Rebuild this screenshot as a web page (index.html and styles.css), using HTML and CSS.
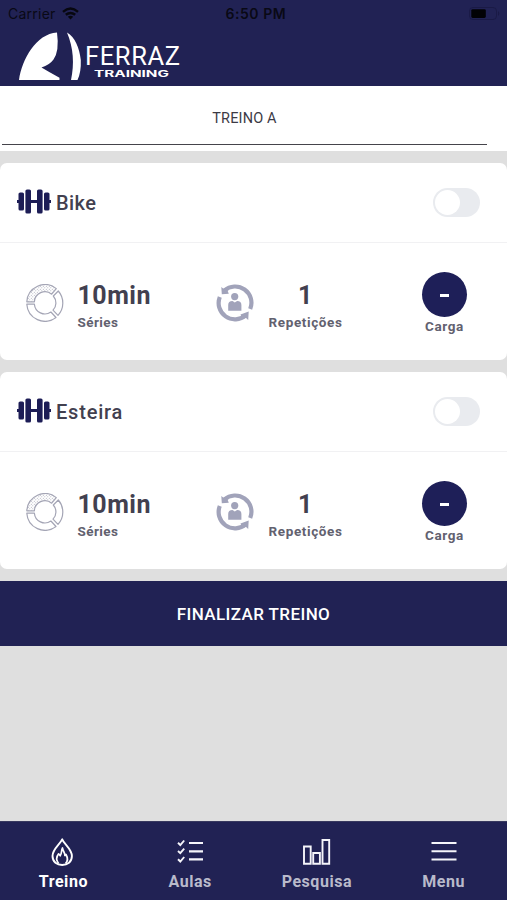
FILE: index.html
```html
<!DOCTYPE html>
<html lang="pt-BR">
<head>
<meta charset="utf-8">
<meta name="viewport" content="width=device-width, initial-scale=1">
<title>Ferraz Training</title>
<link rel="stylesheet" href="styles.css">
</head>
<body>
<svg class="defs" width="0" height="0">
  <defs>
    <pattern id="dots" width="3" height="3" patternUnits="userSpaceOnUse">
      <circle cx=".8" cy=".8" r=".5" fill="#a4a5b5"/><circle cx="2.3" cy="2.3" r=".5" fill="#a4a5b5"/>
    </pattern>
    <symbol id="dumbbell" viewBox="0 0 34 25">
      <path d="M0 12.5h3M12 12.5h10M31 12.5h3" stroke="#1d1d56" stroke-width="3.2"/>
      <g fill="#1d1d56"><rect x="1.5" y="3.5" width="5.5" height="18" rx="1.6"/><rect x="8.4" y=".5" width="5.6" height="24" rx="1.6"/><rect x="20" y=".5" width="5.6" height="24" rx="1.6"/><rect x="27" y="3.5" width="5.5" height="18" rx="1.6"/></g>
    </symbol>
    <symbol id="ring" viewBox="0 0 38 38">
      <g fill="none" stroke="#a4a5b5" stroke-width="1.2" stroke-linejoin="round">
        <path d="M.8 17.8A18.2 18.2 0 0 1 30.3 4.6L25.7 10.2A10.5 10.5 0 0 0 8.4 17.8Z" fill="url(#dots)"/>
        <path d="M.8 20.2A18.2 18.2 0 0 0 30 33.5L24.9 28A10.5 10.5 0 0 1 8.4 20.2Z"/>
        <path d="M32.3 7A18.2 18.2 0 0 1 32 31.3L27 26.2A10.5 10.5 0 0 0 27.3 12Z"/>
      </g>
    </symbol>
    <symbol id="cycle" viewBox="0 0 38 38">
      <path d="M8.300 6.600A16.3 16.3 0 0 1 34.200 25M29.800 31.200A16.3 16.3 0 0 1 3.800 13" fill="none" stroke="#a1a3ba" stroke-width="4.200"/>
      <g fill="#a1a3ba"><path d="M5.3 3L7.500 4.800 10.500 4 12.8 9.800 5.8 10.2Z"/><path d="M32.700 27.6L32.200 36 29.800 33.800 26 34.500 24.5 30.600Z"/><circle cx="18.700" cy="12.6" r="3.6"/><path d="M12.2 26.8V21q0-4.1 4.3-4.1l2.3 1.5 2.3-1.5q4.3 0 4.3 4.1v5.8z"/></g>
    </symbol>
  </defs>
</svg>

<div class="screen">
  <header class="header">
    <div class="status">
      <span class="carrier">Carrier</span>
      <svg class="wifi" width="17" height="13" viewBox="0 0 17 13"><g fill="none" stroke="#07070f" stroke-width="2.4"><path d="M1 4.8Q8.5-1.6 16 4.8M3.8 7.8Q8.5 4 13.2 7.8"/></g><path d="M5.8 9.7Q8.5 7.6 11.2 9.7L8.5 12.5Z" fill="#07070f"/></svg>
      <span class="clock">6:50 PM</span>
      <svg class="battery" width="32" height="13" viewBox="0 0 32 13"><rect x=".5" y=".5" width="27" height="12" rx="3.5" fill="none" stroke="#1a1a46"/><rect x="2.3" y="2.2" width="14.5" height="8.8" rx="1.4" fill="#020205"/><path d="M29 4q2.8 2.5 0 5z" fill="#1a1a46"/></svg>
    </div>
    <svg class="logo" width="162" height="50" viewBox="0 0 162 50">
      <path d="M0 48C3 27 17 2 38 .5Q40.500 19 34.500 27.500 30.500 33 22.5 35.5 30 40 40.500 45.800V48Z" fill="#fff"/>
      <path d="M48 .5C56 5 60.500 16 61.8 28Q62.300 40 58.5 48H52C55.500 32 54.500 16 48 .5Z" fill="#fff"/>
      <text class="logo-name" x="66" y="32.500" textLength="95" lengthAdjust="spacing">FERRAZ</text>
      <text class="logo-sub" x="75" y="44.5" textLength="75" lengthAdjust="spacingAndGlyphs">TRAINING</text>
    </svg>
  </header>

  <div class="tabs"><div class="tab">TREINO A</div></div>

  <main class="content">
    <section class="card">
      <div class="card-head">
        <svg class="dumbbell" width="34" height="25"><use href="#dumbbell"/></svg>
        <h2 class="name">Bike</h2>
        <span class="switch"></span>
      </div>
      <div class="stats">
        <svg class="stat-icon" width="38" height="38"><use href="#ring"/></svg>
        <div class="stat series"><b class="value">10min</b><span class="label">Séries</span></div>
        <svg class="stat-icon" width="38" height="38"><use href="#cycle"/></svg>
        <div class="stat reps"><b class="value">1</b><span class="label">Repetições</span></div>
        <div class="load"><span class="load-btn"><i class="dash"></i></span><span class="label">Carga</span></div>
      </div>
    </section>
    <section class="card">
      <div class="card-head">
        <svg class="dumbbell" width="34" height="25"><use href="#dumbbell"/></svg>
        <h2 class="name wide">Esteira</h2>
        <span class="switch"></span>
      </div>
      <div class="stats">
        <svg class="stat-icon" width="38" height="38"><use href="#ring"/></svg>
        <div class="stat series"><b class="value">10min</b><span class="label">Séries</span></div>
        <svg class="stat-icon" width="38" height="38"><use href="#cycle"/></svg>
        <div class="stat reps"><b class="value">1</b><span class="label">Repetições</span></div>
        <div class="load"><span class="load-btn"><i class="dash"></i></span><span class="label">Carga</span></div>
      </div>
    </section>
    <div class="finish"><span>FINALIZAR TREINO</span></div>
  </main>

  <nav class="nav">
    <div class="nav-item active">
      <svg width="28" height="30" viewBox="0 0 28 30"><g fill="none" stroke="#fff" stroke-linejoin="round"><path d="M13.2 2.3C11.5 7 3.5 12 3.5 19 3.5 25 8 28 13.2 28S22.900 25 22.900 19C22.900 12 15 7 13.200 2.300Z" stroke-width="1.900"/><path d="M9.600 26.500C6.800 23 7.500 19.500 9.600 16.800L11.200 18.800C13 16.500 12 13.500 13.500 11 14 14.500 16 15.500 15.900 18.500L17 17.500C19 21 18.600 24.500 16.500 26.500" stroke-width="1.700"/></g></svg>
      <span class="nav-text">Treino</span>
    </div>
    <div class="nav-item">
      <svg width="28" height="30" viewBox="0 0 28 30"><g fill="none" stroke="#f5f5fa" stroke-width="2.200"><path d="M13 6H27M13 14.300H27M13 22.300H27"/><path d="M2 5.800L4.300 8 8.200 3.500M2 14L4.300 16.200 8.200 11.700M2 22.300L4.300 24.500 8.200 20" stroke-width="1.900"/></g></svg>
      <span class="nav-text">Aulas</span>
    </div>
    <div class="nav-item">
      <svg width="28" height="30" viewBox="0 0 28 30"><path d="M1 9.500h6.700v17.300H1zM10.200 16h6.700v10.800h-6.700zM19.500 3h6.700v23.800h-6.700z" fill="none" stroke="#f5f5fa" stroke-width="1.900"/></svg>
      <span class="nav-text">Pesquisa</span>
    </div>
    <div class="nav-item">
      <svg width="28" height="30" viewBox="0 0 28 30"><path d="M1.500 6h25M1.500 14.300h25M1.500 22.500h25" fill="none" stroke="#f5f5fa" stroke-width="2"/></svg>
      <span class="nav-text">Menu</span>
    </div>
  </nav>
</div>
</body>
</html>
```
FILE: styles.css
```css
* { box-sizing: border-box; }
body { margin: 0; background: #dfdfdf; font-family: Roboto, "Liberation Sans", sans-serif; color: #42404f; }
.defs { position: absolute; }
.screen { width: 507px; height: 900px; display: flex; flex-direction: column; overflow: hidden; }
svg { display: block; flex: none; }

.header { height: 86px; flex: none; background: #212254; }
.status { height: 28px; display: grid; grid-template-columns: 54px 146px 1fr 38px; align-items: center; padding-left: 8px; font-family: Inter, sans-serif; font-size: 14px; color: #090915; }
.carrier, .clock { margin-top: -2px; }
.wifi, .battery { margin-top: -1px; }
.carrier { letter-spacing: .25px; }
.clock { font-weight: 600; letter-spacing: .55px; padding-left: 17.500px; }
.wifi { justify-self: start; }
.logo { margin: 4px 0 0 19px; }
.logo-name { font: 400 25.500px Roboto, sans-serif; fill: #fff; }
.logo-sub { font: 700 8.500px Inter, sans-serif; fill: #fff; }

.tabs { height: 65px; flex: none; background: #fff; }
.tab { width: 485px; height: 59px; margin-left: 2px; border-bottom: 1px solid #45444b; text-align: center; font-size: 14.500px; line-height: 65px; letter-spacing: .15px; color: #3c3a45; }

.content { flex: 1; display: flex; flex-direction: column; padding-top: 12px; }
.card { height: 197px; flex: none; background: #fff; border-radius: 7px; margin-bottom: 12px; }
.card-head { height: 80px; border-bottom: 1px solid #f1f1f3; display: flex; align-items: center; padding: 0 27px 0 17px; }
.dumbbell { margin-top: -2px; }
.name { margin: 0 0 0 5px; flex: 1; font-size: 20px; font-weight: 500; letter-spacing: .45px; line-height: 24px; }
.wide { letter-spacing: .8px; }
.switch { width: 47px; height: 29px; border-radius: 15px; background: #e9ebef; padding: 2px; }
.switch::before { content: ""; display: block; width: 25px; height: 25px; border-radius: 50%; background: #fff; }

.stats { height: 117px; display: grid; grid-template-columns: 38px 124px 38px 76px 45px; column-gap: 14px; padding-left: 25.500px; align-items: start; }
.stat-icon { margin-top: 41px; }
.stat, .load { display: flex; flex-direction: column; }
.reps { align-items: center; }
.value { font-size: 25px; line-height: 28px; margin-top: 39px; letter-spacing: .5px; font-weight: 700; }
.label { font-size: 13.500px; line-height: 16px; font-weight: 700; color: #62616f; letter-spacing: .4px; white-space: nowrap; }
.stat .label { margin-top: 4px; }
.reps .label { letter-spacing: .6px; }
.load { width: 45px; align-items: center; margin-left: 64.500px; }
.load-btn { width: 45px; height: 45px; margin-top: 29px; border-radius: 50%; background: #1e1f58; display: flex; align-items: center; justify-content: center; }
.dash { width: 9px; height: 3px; background: #fff; margin-top: 2px; }
.load .label { margin-top: 1px; letter-spacing: .6px; }

.finish { height: 65px; background: #212254; display: flex; align-items: center; justify-content: center; font-size: 17px; font-weight: 500; color: #fff; letter-spacing: .4px; }

.nav { height: 79px; flex: none; background: #212254; border-top: 1px solid #38395f; display: grid; grid-template-columns: repeat(4, 1fr); }
.nav-item { display: flex; flex-direction: column; align-items: center; padding-top: 15px; color: #b9bacb; }
.nav-text { margin-top: 5px; font-size: 16px; line-height: 20px; font-weight: 700; letter-spacing: .55px; }
.active { color: #fff; }
```
